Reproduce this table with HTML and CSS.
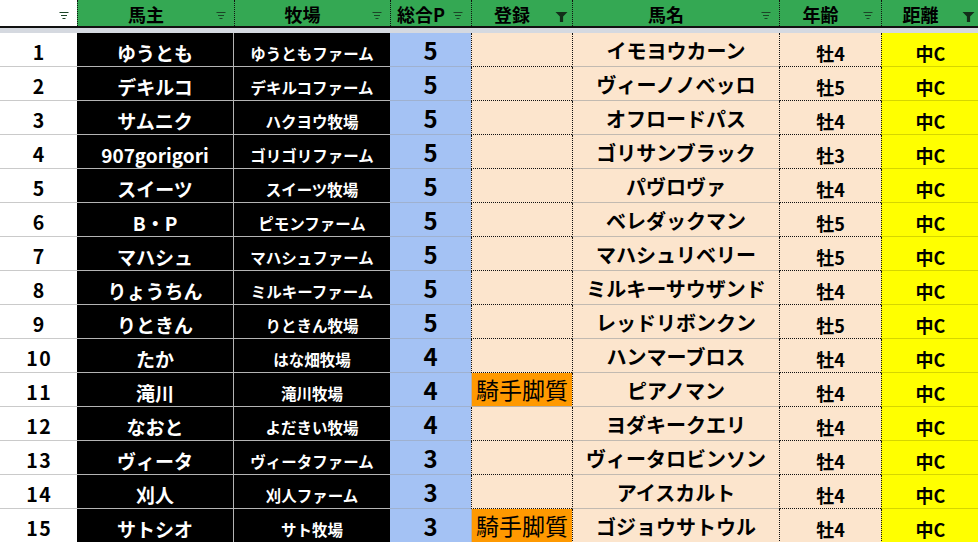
FILE: index.html
```html
<!DOCTYPE html>
<html lang="ja">
<head>
<meta charset="utf-8">
<title>Sheet</title>
<link rel="stylesheet" href="styles.css">
</head>
<body>
<div class="sheet">
  <div class="row head">
    <div class="h c0"><span class="lbl"></span><svg class="ic" viewBox="0 0 10 8"><path d="M0.5 0.5h9M2 3.5h6M3.5 6.5h3" stroke="#1b4426" stroke-width="1.2"/></svg></div>
    <div class="h"><span class="lbl">馬主</span><svg class="ic" viewBox="0 0 10 8"><path d="M0.5 0.5h9M2 3.5h6M3.5 6.5h3" stroke="#1b4426" stroke-width="1.2"/></svg></div>
    <div class="h"><span class="lbl">牧場</span><svg class="ic" viewBox="0 0 10 8"><path d="M0.5 0.5h9M2 3.5h6M3.5 6.5h3" stroke="#1b4426" stroke-width="1.2"/></svg></div>
    <div class="h"><span class="lbl">総合P</span><svg class="ic" viewBox="0 0 10 8"><path d="M0.5 0.5h9M2 3.5h6M3.5 6.5h3" stroke="#1b4426" stroke-width="1.2"/></svg></div>
    <div class="h"><span class="lbl">登録</span><svg class="ic fn" viewBox="0 0 12 10"><path d="M0 0H12L7.6 4.6V10H4.4V4.6Z" fill="#132e1a"/></svg></div>
    <div class="h"><span class="lbl">馬名</span><svg class="ic" viewBox="0 0 10 8"><path d="M0.5 0.5h9M2 3.5h6M3.5 6.5h3" stroke="#1b4426" stroke-width="1.2"/></svg></div>
    <div class="h"><span class="lbl">年齢</span><svg class="ic" viewBox="0 0 10 8"><path d="M0.5 0.5h9M2 3.5h6M3.5 6.5h3" stroke="#1b4426" stroke-width="1.2"/></svg></div>
    <div class="h"><span class="lbl">距離</span><svg class="ic fn" viewBox="0 0 12 10"><path d="M0 0H12L7.6 4.6V10H4.4V4.6Z" fill="#132e1a"/></svg></div>
  </div>
  <div class="band"></div>

  <div class="row"><div class="c c0">1</div><div class="c c1">ゆうとも</div><div class="c c2">ゆうともファーム</div><div class="c c3">5</div><div class="c c4"></div><div class="c c5">イモヨウカーン</div><div class="c c6">牡4</div><div class="c c7">中C</div></div>
  <div class="row"><div class="c c0">2</div><div class="c c1">デキルコ</div><div class="c c2">デキルコファーム</div><div class="c c3">5</div><div class="c c4"></div><div class="c c5">ヴィーノノベッロ</div><div class="c c6">牡5</div><div class="c c7">中C</div></div>
  <div class="row"><div class="c c0">3</div><div class="c c1">サムニク</div><div class="c c2">ハクヨウ牧場</div><div class="c c3">5</div><div class="c c4"></div><div class="c c5">オフロードパス</div><div class="c c6">牡4</div><div class="c c7">中C</div></div>
  <div class="row"><div class="c c0">4</div><div class="c c1">907gorigori</div><div class="c c2">ゴリゴリファーム</div><div class="c c3">5</div><div class="c c4"></div><div class="c c5">ゴリサンブラック</div><div class="c c6">牡3</div><div class="c c7">中C</div></div>
  <div class="row"><div class="c c0">5</div><div class="c c1">スイーツ</div><div class="c c2">スイーツ牧場</div><div class="c c3">5</div><div class="c c4"></div><div class="c c5">パヴロヴァ</div><div class="c c6">牡4</div><div class="c c7">中C</div></div>
  <div class="row"><div class="c c0">6</div><div class="c c1">B・P</div><div class="c c2">ピモンファーム</div><div class="c c3">5</div><div class="c c4"></div><div class="c c5">ベレダックマン</div><div class="c c6">牡5</div><div class="c c7">中C</div></div>
  <div class="row"><div class="c c0">7</div><div class="c c1">マハシュ</div><div class="c c2">マハシュファーム</div><div class="c c3">5</div><div class="c c4"></div><div class="c c5">マハシュリベリー</div><div class="c c6">牡5</div><div class="c c7">中C</div></div>
  <div class="row"><div class="c c0">8</div><div class="c c1">りょうちん</div><div class="c c2">ミルキーファーム</div><div class="c c3">5</div><div class="c c4"></div><div class="c c5">ミルキーサウザンド</div><div class="c c6">牡4</div><div class="c c7">中C</div></div>
  <div class="row"><div class="c c0">9</div><div class="c c1">りときん</div><div class="c c2">りときん牧場</div><div class="c c3">5</div><div class="c c4"></div><div class="c c5">レッドリボンクン</div><div class="c c6">牡5</div><div class="c c7">中C</div></div>
  <div class="row"><div class="c c0">10</div><div class="c c1">たか</div><div class="c c2">はな畑牧場</div><div class="c c3">4</div><div class="c c4"></div><div class="c c5">ハンマーブロス</div><div class="c c6">牡4</div><div class="c c7">中C</div></div>
  <div class="row"><div class="c c0">11</div><div class="c c1">滝川</div><div class="c c2">滝川牧場</div><div class="c c3">4</div><div class="c c4 tag">騎手脚質</div><div class="c c5">ピアノマン</div><div class="c c6">牡4</div><div class="c c7">中C</div></div>
  <div class="row"><div class="c c0">12</div><div class="c c1">なおと</div><div class="c c2">よだきい牧場</div><div class="c c3">4</div><div class="c c4"></div><div class="c c5">ヨダキークエリ</div><div class="c c6">牡4</div><div class="c c7">中C</div></div>
  <div class="row"><div class="c c0">13</div><div class="c c1">ヴィータ</div><div class="c c2">ヴィータファーム</div><div class="c c3">3</div><div class="c c4"></div><div class="c c5">ヴィータロビンソン</div><div class="c c6">牡4</div><div class="c c7">中C</div></div>
  <div class="row"><div class="c c0">14</div><div class="c c1">刈人</div><div class="c c2">刈人ファーム</div><div class="c c3">3</div><div class="c c4"></div><div class="c c5">アイスカルト</div><div class="c c6">牡4</div><div class="c c7">中C</div></div>
  <div class="row"><div class="c c0">15</div><div class="c c1">サトシオ</div><div class="c c2">サト牧場</div><div class="c c3">3</div><div class="c c4 tag">騎手脚質</div><div class="c c5">ゴジョウサトウル</div><div class="c c6">牡4</div><div class="c c7">中C</div></div>
</div>
</body>
</html>
```
FILE: styles.css
```css
* { box-sizing: border-box; }
html, body {
  margin: 0;
  padding: 0;
  background: #ffffff;
  overflow: hidden;
}
.sheet {
  width: 978px;
  height: 542px;
  overflow: hidden;
  font-family: "Noto Sans CJK JP", "Noto Sans", sans-serif;
  font-weight: 700;
  color: #000;
}
.row {
  display: grid;
  grid-template-columns: 77px 157px 156px 81px 101px 207px 102px 98px;
  height: 34px;
}
.row.head {
  height: 28px;
  background: #34a853;
  border-bottom: 2px solid #111;
}
.h {
  display: flex;
  align-items: center;
  border-left: 1px dotted #111;
  font-size: 18px;
  line-height: 1;
}
.h.c0 { border-left: none; }
.h .lbl {
  flex: 1;
  text-align: center;
  padding-top: 1px;
}
.h .ic {
  width: 10px;
  height: 8px;
  margin: 6px 8px 0 2px;
  flex: none;
}
.h .ic.fn {
  width: 13px;
  height: 10px;
  margin: 8px 4px 0 3px;
}
.band {
  height: 5px;
  background: #d5d9e0;
}
.c {
  display: flex;
  align-items: center;
  justify-content: center;
  line-height: 1;
  white-space: nowrap;
  padding-top: 5px;
  border-bottom: 1px solid #c4c4c4;
}
.c0 { background: #fff; font-size: 19.5px; letter-spacing: 1.5px; text-indent: 1.5px; border-bottom-color: #cacaca; }
.c1 { background: #000; color: #fff; font-size: 19px; border-bottom-color: #b4b4b4; border-right: 1px solid #b4b4b4; }
.c2 { background: #000; color: #fff; font-size: 15.5px; padding-top: 9px; border-bottom-color: #b4b4b4; }
.c3 { background: #a4c2f4; font-size: 24px; padding-top: 0; border-bottom-color: #9fb1cf; }
.c4 { background: #fce5cd; border-left: 1px dotted #111; border-bottom: 1px dotted #111; }
.c4.tag {
  background: #ff9900;
  font-weight: 400;
  font-size: 23px;
  padding-top: 0;
  border-left: 1px solid #b9b0a6;
  border-bottom: 1px solid #b9b0a6;
}
.c5 { background: #fce5cd; font-size: 20px; padding-top: 3px; border-left: 1px dotted #111; border-bottom-color: #c2bab1; }
.c6 { background: #fce5cd; font-size: 18px; padding-top: 6px; border-left: 1px dotted #111; border-bottom: 1px dotted #111; }
.c7 { background: #ffff00; font-size: 18px; padding-top: 6px; border-left: 1px dotted #111; border-bottom-color: #d6d600; }
```
